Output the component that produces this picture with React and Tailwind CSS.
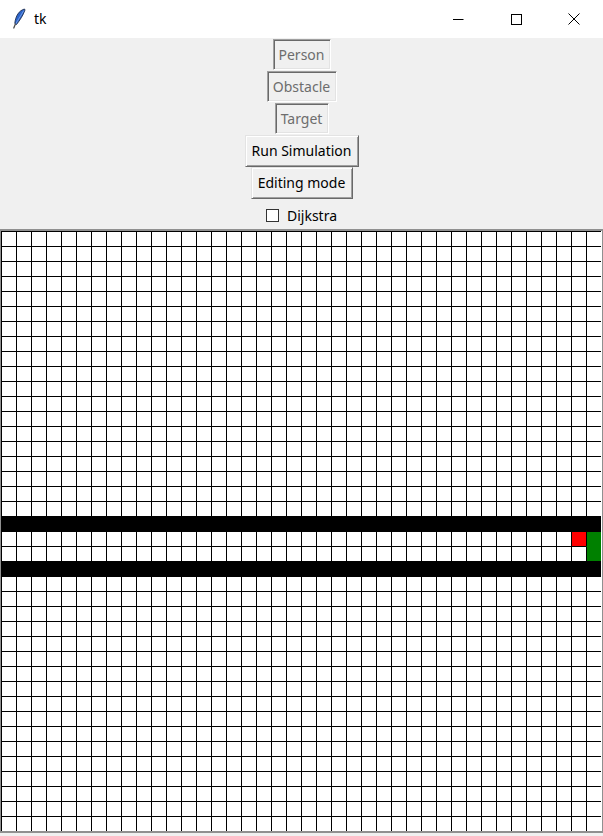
import React from 'react'

const ROWS = 40
const COLS = 40

function cellColor(r, c) {
  if (r === 19 || r === 22) return 'bg-black'
  if (r === 20 && c === 38) return 'bg-[#ff0000]'
  if ((r === 20 || r === 21) && c === 39) return 'bg-[#008000]'
  return 'bg-white'
}

function Feather() {
  return (
    <svg width="14" height="21" viewBox="0 0 14 21">
      <path d="M12.5 1 C7 2.5 3.5 8 2.8 15.5 L4.5 16.5 C8 12 11 7.5 13 2 Z" fill="#2a62c9" stroke="#1f2f4f" strokeWidth="0.9" />
      <path d="M11.8 2.5 L3.6 16" stroke="#8fb6f5" strokeWidth="0.7" />
      <path d="M3.4 16 L1.8 20" stroke="#4a4a4a" strokeWidth="1.3" strokeLinecap="round" />
    </svg>
  )
}

function SunkenButton({ label, width }) {
  return (
    <div
      className={`${width} h-[31px] mb-[1px] flex items-center justify-center border border-t-[#a0a0a0] border-l-[#a0a0a0] border-r-white border-b-white shadow-[inset_1px_1px_0_#696969,inset_-1px_-1px_0_#e3e3e3] text-[#6d6d6d]`}
    >
      {label}
    </div>
  )
}

function RaisedButton({ label, width }) {
  return (
    <div
      className={`${width} h-[32px] flex items-center justify-center border border-t-[#e3e3e3] border-l-[#e3e3e3] border-r-[#696969] border-b-[#696969] shadow-[inset_1px_1px_0_#ffffff,inset_-1px_-1px_0_#a0a0a0] text-black`}
    >
      {label}
    </div>
  )
}

export default function App() {
  const cells = []
  for (let r = 0; r < ROWS; r++) {
    for (let c = 0; c < COLS; c++) {
      // second green cell has no line between the two rows
      const joined = r === 21 && c === 39
      cells.push(
        <div
          key={`${r}-${c}`}
          className={`w-[15px] h-[15px] border-l border-t border-black ${cellColor(r, c)} ${joined ? 'border-t-[#008000]' : ''}`}
        />
      )
    }
  }

  return (
    <div className="w-[603px] h-[836px] overflow-hidden bg-[#f0f0f0] font-['Noto_Sans','Open_Sans',sans-serif] text-[14px] leading-none">
      {/* title bar */}
      <div className="h-[38px] bg-white flex items-center">
        <div className="ml-[12px] mt-[-1px]">
          <Feather />
        </div>
        <span className="ml-[8px] text-[14px] text-black">tk</span>
        <div className="ml-auto flex h-full">
          <div className="w-[58px] flex items-center justify-center">
            <svg width="11" height="11" viewBox="0 0 11 11">
              <path d="M0 5.5 H10.5" stroke="#000" strokeWidth="1" />
            </svg>
          </div>
          <div className="w-[58px] flex items-center justify-center">
            <svg width="11" height="11" viewBox="0 0 11 11">
              <rect x="0.5" y="0.5" width="10" height="10" fill="none" stroke="#000" strokeWidth="1" />
            </svg>
          </div>
          <div className="w-[58px] flex items-center justify-center">
            <svg width="12" height="12" viewBox="0 0 12 12">
              <path d="M0.5 0.5 L11.5 11.5 M11.5 0.5 L0.5 11.5" stroke="#000" strokeWidth="1" />
            </svg>
          </div>
        </div>
      </div>

      {/* controls */}
      <div className="h-[191px] flex flex-col items-center pt-[1px]">
        <SunkenButton label="Person" width="w-[58px]" />
        <SunkenButton label="Obstacle" width="w-[70px]" />
        <SunkenButton label="Target" width="w-[54px]" />
        <RaisedButton label="Run Simulation" width="w-[114px]" />
        <RaisedButton label="Editing mode" width="w-[102px]" />
        <div className="h-[30px] pt-[3px] flex items-center gap-[8px]">
          <div className="w-[13px] h-[13px] bg-white border border-[#333333]" />
          <span>Dijkstra</span>
        </div>
      </div>

      {/* canvas */}
      <div className="w-[604px] border-2 border-l border-[#909090] bg-white">
        <div className="grid grid-cols-[repeat(40,15px)] w-[600px]">{cells}</div>
      </div>
    </div>
  )
}
